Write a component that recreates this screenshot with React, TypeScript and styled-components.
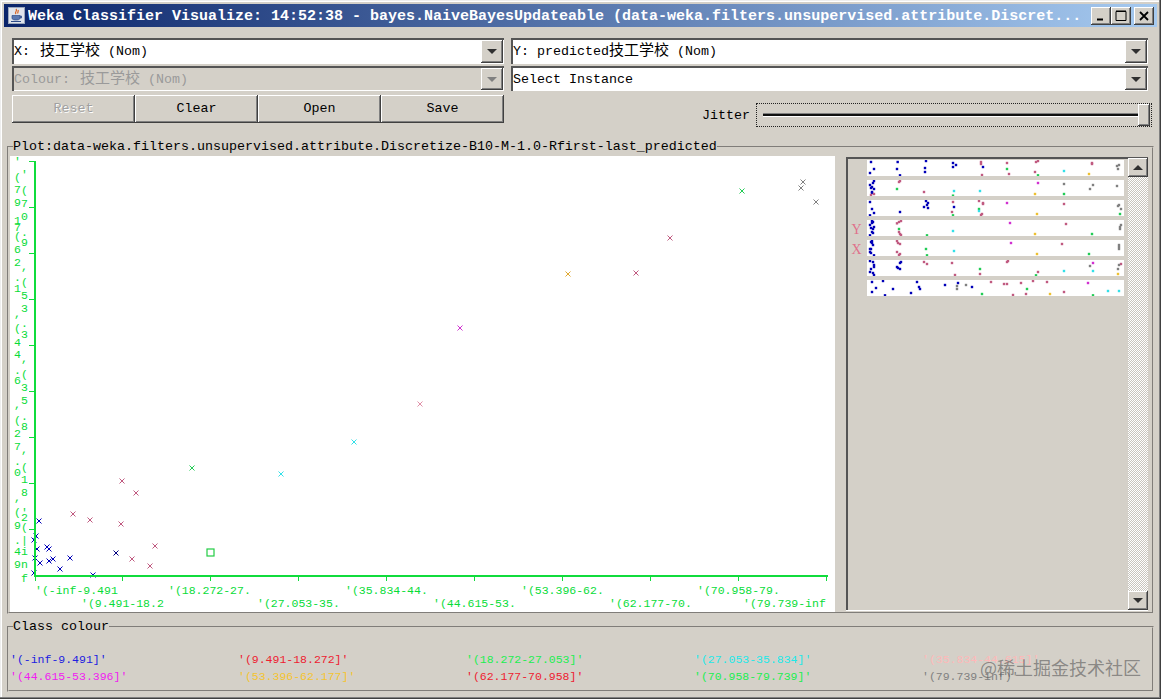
import React from 'react';
import styled, { createGlobalStyle, css } from 'styled-components';

const FACE = '#d4d0c8';
const MONO = '"Liberation Mono", "Noto Sans CJK SC", monospace';

const raised = css`
  background: ${FACE};
  box-shadow: inset -1px -1px 0 #404040, inset 1px 1px 0 #fff, inset -2px -2px 0 #808080;
`;

const GlobalStyle = createGlobalStyle`
  html, body {
    margin: 0;
    padding: 0;
    background: ${FACE};
    overflow: hidden;
  }
`;

const Win = styled.div`
  position: relative;
  box-sizing: border-box;
  width: 1161px;
  height: 699px;
  padding: 4px;
  background: ${FACE};
  font-family: ${MONO};
  font-size: 13.33px;
  color: #000;
  box-shadow: inset -1px -1px 0 #404040, inset -2px -2px 0 #808080, inset 1px 1px 0 #eee, inset 2px 2px 0 #fff;
  overflow: hidden;
`;

const TitleBar = styled.div`
  display: flex;
  align-items: center;
  height: 23px;
  padding-left: 4px;
  padding-right: 3px;
  background: linear-gradient(90deg, #0a246a, #a6caf0);
`;

const TitleIcon = styled.svg`
  flex: none;
  width: 17px;
  height: 17px;
  margin-right: 3px;
`;

const TitleText = styled.div`
  flex: 1;
  min-width: 0;
  padding-top: 2px;
  color: #fff;
  font-size: 15px;
  font-weight: 700;
  white-space: nowrap;
  overflow: hidden;
`;

const WinButtons = styled.div`
  display: flex;
  flex: none;
`;

const WinButton = styled.div<{ $gap?: boolean }>`
  ${raised}
  display: flex;
  align-items: center;
  justify-content: center;
  width: 20px;
  height: 18px;
  margin-left: ${({ $gap }) => ($gap ? '3px' : '0')};
`;

const Controls = styled.div`
  display: grid;
  grid-template-columns: 492px 637px;
  column-gap: 7px;
  grid-template-rows: 26px 25px 35px;
  row-gap: 2px;
  margin: 11px 0 0 8px;
`;

const Combo = styled.div<{ $off?: boolean }>`
  display: flex;
  box-sizing: border-box;
  height: 100%;
  background: ${({ $off }) => ($off ? FACE : '#fff')};
  color: ${({ $off }) => ($off ? '#9a9a9a' : '#000')};
  box-shadow: inset 2px 2px 0 #555, inset -1px -1px 0 #fff;
  padding: 2px 1px 1px 2px;
`;

const ComboText = styled.div`
  flex: 1;
  line-height: 24px;
  white-space: pre;
`;

const Cjk = styled.span<{ $gap?: boolean }>`
  font-size: 15px;
  margin-left: ${({ $gap }) => ($gap ? '2px' : '0')};
`;

const ComboArrow = styled.div`
  ${raised}
  display: flex;
  align-items: center;
  justify-content: center;
  width: 22px;
`;

const Arrow = styled.span<{ $up?: boolean; $off?: boolean }>`
  width: 0;
  height: 0;
  border-left: 5px solid transparent;
  border-right: 5px solid transparent;
  ${({ $up, $off }) =>
    $up
      ? `border-bottom: 5px solid ${$off ? '#808080' : '#303030'};`
      : `border-top: 5px solid ${$off ? '#808080' : '#303030'};`}
`;

const Buttons = styled.div`
  display: grid;
  grid-template-columns: repeat(4, 123px);
  height: 26px;
  margin-top: 2px;
`;

const Btn = styled.div<{ $off?: boolean }>`
  ${raised}
  text-align: center;
  line-height: 28px;
  color: ${({ $off }) => ($off ? '#a0a0a0' : '#000')};
  text-shadow: ${({ $off }) => ($off ? '1px 1px 0 #fff' : 'none')};
`;

const JitterRow = styled.div`
  display: flex;
  justify-content: flex-end;
  align-items: center;
  margin: 9px -4px 0 0;
`;

const JitterLabel = styled.div`
  margin-right: 6px;
`;

const Slider = styled.div`
  display: flex;
  align-items: center;
  box-sizing: border-box;
  width: 396px;
  height: 24px;
  padding: 0 1px 0 6px;
  border: 1px dotted #222;
`;

const SliderTrack = styled.div`
  flex: 1;
  height: 2px;
  background: #111;
  box-shadow: 0 -1px 0 #808080, 0 1px 0 #fff;
`;

const SliderThumb = styled.div`
  ${raised}
  width: 12px;
  height: 22px;
`;

const Group = styled.fieldset`
  min-width: 0;
  margin: 0 3px;
  border: 2px groove ${FACE};
  font-family: ${MONO};
`;

const PlotGroup = styled(Group)`
  margin-top: 11px;
  padding: 1px 4px 0 1px;
`;

const ClassGroup = styled(Group)`
  margin-top: 5px;
  padding: 16px 0 0 1px;
  height: 73px;
  box-sizing: border-box;
`;

const Legend = styled.legend`
  padding: 0;
  margin-left: 3px;
  line-height: 16px;
  font-size: 13.33px;
`;

const PlotRow = styled.div`
  display: flex;
  gap: 11px;
  height: 456px;
`;

const Plot = styled.svg`
  display: block;
  flex: none;
  width: 825px;
  height: 456px;
  background: #fff;
`;

const AxisChar = styled.text`
  font-family: ${MONO};
  font-size: 11.5px;
  fill: #08dc38;
`;

const Panel = styled.div`
  display: flex;
  flex: 1;
  min-width: 0;
  height: 453px;
  margin-top: 1px;
  box-sizing: border-box;
  padding: 1px 0 0 2px;
  box-shadow: inset 2px 2px 0 #555, 0 1px 0 #fff;
`;

const Strips = styled.div`
  display: flex;
  flex-direction: column;
  gap: 4px;
  width: 276px;
  padding-top: 2px;
`;

const StripRow = styled.div`
  display: flex;
  height: 16px;
`;

const StripMark = styled.div`
  width: 19px;
  padding: 2px 2px 0 0;
  box-sizing: border-box;
  text-align: center;
  line-height: 16px;
  font-family: "Liberation Serif", serif;
  font-size: 14px;
  color: #e0708c;
`;

const Strip = styled.svg`
  display: block;
  width: 257px;
  height: 16px;
  background: #fff;
`;

const ScrollBar = styled.div`
  display: flex;
  flex-direction: column;
  justify-content: space-between;
  width: 20px;
  margin-left: 4px;
  background: repeating-conic-gradient(#c8c5bd 0 25%, #fff 0 50%) 0 0 / 2px 2px;
`;

const ScrollBtn = styled.div`
  ${raised}
  display: flex;
  align-items: center;
  justify-content: center;
  height: 19px;
`;

const ClassGrid = styled.div`
  display: grid;
  grid-template-columns: repeat(5, 228px);
  grid-auto-rows: 17px;
`;

const ClassName = styled.div<{ $c: string }>`
  font-size: 11.5px;
  line-height: 17px;
  color: ${({ $c }) => $c};
  white-space: nowrap;
`;

const Watermark = styled.div`
  position: absolute;
  left: 980px;
  top: 655px;
  font-family: "Noto Sans CJK SC", sans-serif;
  font-size: 18px;
  line-height: 24px;
  color: rgba(90, 90, 90, 0.62);
  white-space: nowrap;
`;

const BLUE = '#0000b8';
const MAUVE = '#c05a80';
const GREEN = '#22cc55';
const CYAN = '#33e0e8';
const MAGENTA = '#d030d0';
const YELLOW = '#eec030';
const GRAY = '#808080';

// x marks of the main plot, in screenshot coordinates
const marks: [number, number, string][] = [
  [803, 182, GRAY], [801, 188, GRAY], [816, 202, GRAY], [742, 191, GREEN],
  [568, 274, '#e0a830'], [636, 273, MAUVE], [670, 238, MAUVE], [460, 328, MAGENTA],
  [420, 404, '#e090a8'], [354, 442, CYAN], [281, 474, CYAN], [192, 468, GREEN],
  [122, 481, MAUVE], [136, 493, MAUVE], [73, 514, MAUVE], [90, 520, MAUVE],
  [121, 524, MAUVE], [155, 546, MAUVE], [132, 559, MAUVE], [150, 566, MAUVE],
  [39, 521, BLUE], [36, 536, BLUE], [34, 540, BLUE], [37, 549, BLUE], [47, 547, BLUE],
  [49, 549, BLUE], [35, 558, BLUE], [40, 563, BLUE], [49, 561, BLUE], [53, 559, BLUE],
  [70, 558, BLUE], [60, 569, BLUE], [34, 573, BLUE], [93, 575, BLUE], [116, 553, '#000080'],
];

const yTicks = [161, 207, 253, 299, 345, 391, 437, 483, 529];
const xTicks = [35, 122, 210, 298, 386, 474, 562, 650, 738, 826];

const yLeft: [string, number][] = [
  ["'", 161], ['(', 177], ['7', 189], ['9', 202], ['1', 220], ['7', 227], ['(', 236], ['6', 249],
  ['2', 262], ['.', 277], ['1', 288], [',', 313], ['(', 328], ['4', 342], ['4', 354], ['.', 370],
  ['6', 380], [',', 404], ['(', 420], ['2', 433], ['7', 446], ['.', 461], ['0', 472], [',', 497],
  ['(', 512], ['9', 525], ['.', 540], ['4', 551], ['9', 564],
];
const yRight: [string, number][] = [
  ["'", 174], ['(', 190], ['7', 203], ['0', 216], ['.', 232], ['9', 242], [',', 266], ['(', 282],
  ['5', 295], ['3', 308], ['.', 323], ['3', 334], [',', 358], ['(', 374], ['3', 387], ['5', 400],
  ['.', 416], ['8', 426], [',', 449], ['(', 467], ['1', 479], ['8', 492], ["'", 512], ['2', 517],
  ['(', 527], ['|', 540], ['i', 551], ['n', 564], ['f', 578],
];

const xLabels: [string, number, number][] = [
  ["'(-inf-9.491", 35, 594], ["'(18.272-27.", 168, 594], ["'(35.834-44.", 345, 594],
  ["'(53.396-62.", 521, 594], ["'(70.958-79.", 697, 594], ["'(9.491-18.2", 81, 607],
  ["'(27.053-35.", 257, 607], ["'(44.615-53.", 433, 607], ["'(62.177-70.", 609, 607],
  ["'(79.739-inf", 743, 607],
];

// dots of the attribute panel, one list per strip: [x, y] inside the strip
type Dots = [string, number[]][];
const strips: { top: number; mark?: string; dots: Dots }[] = [
  {
    top: 30,
    dots: [
      [BLUE, [93,36,173,36,258,33,102,57,171,57,255,54,90,69,255,66,180,76,339,39,348,45,339,51,429,51]],
      [MAUVE, [423,36,423,42,501,39,507,72,426,75,585,66,588,36,594,33,756,39,756,42]],
      [GREEN, [501,57,594,76]], [CYAN, [672,63]], [YELLOW, [747,72]], [GRAY, [837,45,831,48,834,57]],
    ],
  },
  {
    top: 90,
    dots: [
      [BLUE, [102,93,99,99,90,105,96,111,93,114,102,117,96,126,96,129]],
      [MAUVE, [180,93,177,96,102,132,93,135,252,126]],
      [GREEN, [171,117,339,137,672,132]], [CYAN, [342,123,420,123]], [MAGENTA, [594,99]],
      [YELLOW, [585,132]], [GRAY, [672,102,759,105,750,117,831,108]],
    ],
  },
  {
    top: 150,
    dots: [
      [BLUE, [90,156,258,153,264,159,261,165,252,171,264,174,96,177,342,171,180,186,102,189,90,196]],
      [MAUVE, [339,156,417,153,429,159,429,162,336,186,426,192,423,195,672,162]],
      [MAGENTA, [501,159]], [GREEN, [417,177,840,192,339,196]], [CYAN, [417,183]],
      [YELLOW, [591,192]], [GRAY, [837,165,834,168,843,177]],
    ],
  },
  {
    top: 210,
    mark: 'Y',
    dots: [
      [BLUE, [96,213,99,216,96,219,90,225,102,231,93,234,99,237,96,246,99,249,90,256]],
      [MAUVE, [183,213,177,216,171,220,177,246,180,252,183,255,678,222]],
      [MAGENTA, [510,219]], [GREEN, [177,237,261,256,756,252]], [CYAN, [339,243]],
      [YELLOW, [585,252]], [GRAY, [843,225,840,231,840,237]],
    ],
  },
  {
    top: 270,
    mark: 'X',
    dots: [
      [BLUE, [96,273,93,276,96,279,99,285,93,297,90,297,90,306,93,309,102,316]],
      [MAUVE, [171,273,174,279,180,282,171,306,180,312,177,315,666,282]],
      [MAGENTA, [513,279]], [GREEN, [258,297,261,316,747,312]], [CYAN, [342,303]],
      [YELLOW, [591,312]], [GRAY, [837,285,837,291,837,297]],
    ],
  },
  {
    top: 330,
    dots: [
      [BLUE, [90,333,99,336,102,345,102,351,93,357,90,366,99,369,102,375,171,351,174,354,180,357,183,336,180,339]],
      [MAUVE, [252,336,261,342,336,339,504,333,501,336,594,366,345,375,420,372,843,342]],
      [MAGENTA, [759,339]], [GREEN, [420,357,588,376]], [CYAN, [672,363,759,363]],
      [YELLOW, [834,372]], [GRAY, [750,348,837,345,834,357]],
    ],
  },
  {
    top: 390,
    dots: [
      [BLUE, [96,396,129,393,108,414,159,417,96,426,135,436,231,396,237,411,240,417,213,429,315,405,354,399,396,411]],
      [GRAY, [351,408,351,417,378,405]],
      [MAUVE, [453,396,492,402,501,402,543,399,579,393,621,396,519,435,558,432,672,426]],
      [GREEN, [561,417,426,432,759,436]], [MAGENTA, [744,399]], [YELLOW, [630,432]], [CYAN, [804,423,837,423]],
    ],
  },
];

const classes: [string, string][] = [
  ["'(-inf-9.491]'", '#2020e0'],
  ["'(9.491-18.272]'", '#ee2030'],
  ["'(18.272-27.053]'", '#20ee50'],
  ["'(27.053-35.834]'", '#20e8e8'],
  ["'(35.834-44.615]'", '#ffb8b8'],
  ["'(44.615-53.396]'", '#f020f0'],
  ["'(53.396-62.177]'", '#f4c430'],
  ["'(62.177-70.958]'", '#ee2030'],
  ["'(70.958-79.739]'", '#20ee50'],
  ["'(79.739-inf)'", '#808080'],
];

const JavaIcon = () => (
  <TitleIcon viewBox="0 0 17 17">
    <rect x="0.5" y="0.5" width="16" height="16" fill="#dfe4ec" stroke="#9aa6bc" />
    <path d="M8 2c2 2-2 3 0 5M10 3c1 1.500-1 2 0 3.500" fill="none" stroke="#d8601c" strokeWidth="1.200" />
    <path d="M4 8.500h8v2.500c0 1.500-1.500 2-4 2s-4-.5-4-2zM12 9h1.500v2H12" fill="#5a78b0" stroke="#2c4a88" strokeWidth="0.700" />
    <path d="M3 14.500h10" stroke="#2c4a88" />
  </TitleIcon>
);

const App = () => {
  return (
    <Win>
      <GlobalStyle />
      <TitleBar>
        <JavaIcon />
        <TitleText>Weka Classifier Visualize: 14:52:38 - bayes.NaiveBayesUpdateable (data-weka.filters.unsupervised.attribute.Discret...</TitleText>
        <WinButtons>
          <WinButton>
            <svg width="10" height="10" viewBox="0 0 10 10"><path d="M1 8.500h6" stroke="#000" strokeWidth="2" /></svg>
          </WinButton>
          <WinButton>
            <svg width="12" height="11" viewBox="0 0 12 11"><path d="M1 1.500h10v9h-10zM1 1h10" fill="none" stroke="#000" /></svg>
          </WinButton>
          <WinButton $gap>
            <svg width="10" height="10" viewBox="0 0 10 10"><path d="M1 1l8 8M9 1l-8 8" stroke="#000" strokeWidth="1.800" /></svg>
          </WinButton>
        </WinButtons>
      </TitleBar>

      <Controls>
        <Combo>
          <ComboText>X: <Cjk $gap>技工学校</Cjk> (Nom)</ComboText>
          <ComboArrow><Arrow /></ComboArrow>
        </Combo>
        <Combo>
          <ComboText>Y: predicted<Cjk>技工学校</Cjk> (Nom)</ComboText>
          <ComboArrow><Arrow /></ComboArrow>
        </Combo>
        <Combo $off>
          <ComboText>Colour: <Cjk $gap>技工学校</Cjk> (Nom)</ComboText>
          <ComboArrow><Arrow $off /></ComboArrow>
        </Combo>
        <Combo>
          <ComboText>Select Instance</ComboText>
          <ComboArrow><Arrow /></ComboArrow>
        </Combo>
        <Buttons>
          <Btn $off>Reset</Btn>
          <Btn>Clear</Btn>
          <Btn>Open</Btn>
          <Btn>Save</Btn>
        </Buttons>
        <JitterRow>
          <JitterLabel>Jitter</JitterLabel>
          <Slider>
            <SliderTrack />
            <SliderThumb />
          </Slider>
        </JitterRow>
      </Controls>

      <PlotGroup>
        <Legend>Plot:data-weka.filters.unsupervised.attribute.Discretize-B10-M-1.0-Rfirst-last_predicted</Legend>
        <PlotRow>
          <Plot viewBox="10 156 825 456">
            {marks.map(([x, y, c], i) => (
              <path key={i} d={`M${x - 2.5} ${y - 2.5}l5 5M${x + 2.5} ${y - 2.5}l-5 5`} stroke={c} fill="none" />
            ))}
            <rect x="207" y="549" width="7" height="7" fill="none" stroke="#22cc44" strokeWidth="1.200" />
            <g stroke="#10dc3c" fill="none" shapeRendering="crispEdges">
              <path d="M35 161v415H828" strokeWidth="2" />
              {yTicks.map(y => <path key={y} d={`M29 ${y + 0.5}h6`} />)}
              {xTicks.map(x => <path key={x} d={`M${x + 0.5} 576v5`} />)}
            </g>
            {yLeft.map(([ch, y], i) => (
              <AxisChar key={`l${i}`} x="14" y={y + 4}>{ch}</AxisChar>
            ))}
            {yRight.map(([ch, y], i) => (
              <AxisChar key={`r${i}`} x="21" y={y + 4}>{ch}</AxisChar>
            ))}
            {xLabels.map(([t, x, y]) => (
              <AxisChar key={t} x={x} y={y}>{t}</AxisChar>
            ))}
          </Plot>
          <Panel>
            <Strips>
              {strips.map(s => (
                <StripRow key={s.top}>
                  <StripMark>{s.mark}</StripMark>
                  <Strip viewBox="0 0 257 16">
                    {s.dots.map(([c, pts]) =>
                      pts.map((v, i) =>
                        i % 2 === 0 ? (
                          <rect
                            key={`${c}${i}`}
                            x={v / 3 - 27 - 1.200}
                            y={(pts[i + 1] - s.top) / 3 - 1.200}
                            width="2.400"
                            height="2.400"
                            fill={c}
                          />
                        ) : null
                      )
                    )}
                  </Strip>
                </StripRow>
              ))}
            </Strips>
            <ScrollBar>
              <ScrollBtn><Arrow $up /></ScrollBtn>
              <ScrollBtn><Arrow /></ScrollBtn>
            </ScrollBar>
          </Panel>
        </PlotRow>
      </PlotGroup>

      <ClassGroup>
        <Legend>Class colour</Legend>
        <ClassGrid>
          {classes.map(([name, c]) => (
            <ClassName key={name} $c={c}>{name}</ClassName>
          ))}
        </ClassGrid>
      </ClassGroup>

      <Watermark>@稀土掘金技术社区</Watermark>
    </Win>
  );
};

export default App;
